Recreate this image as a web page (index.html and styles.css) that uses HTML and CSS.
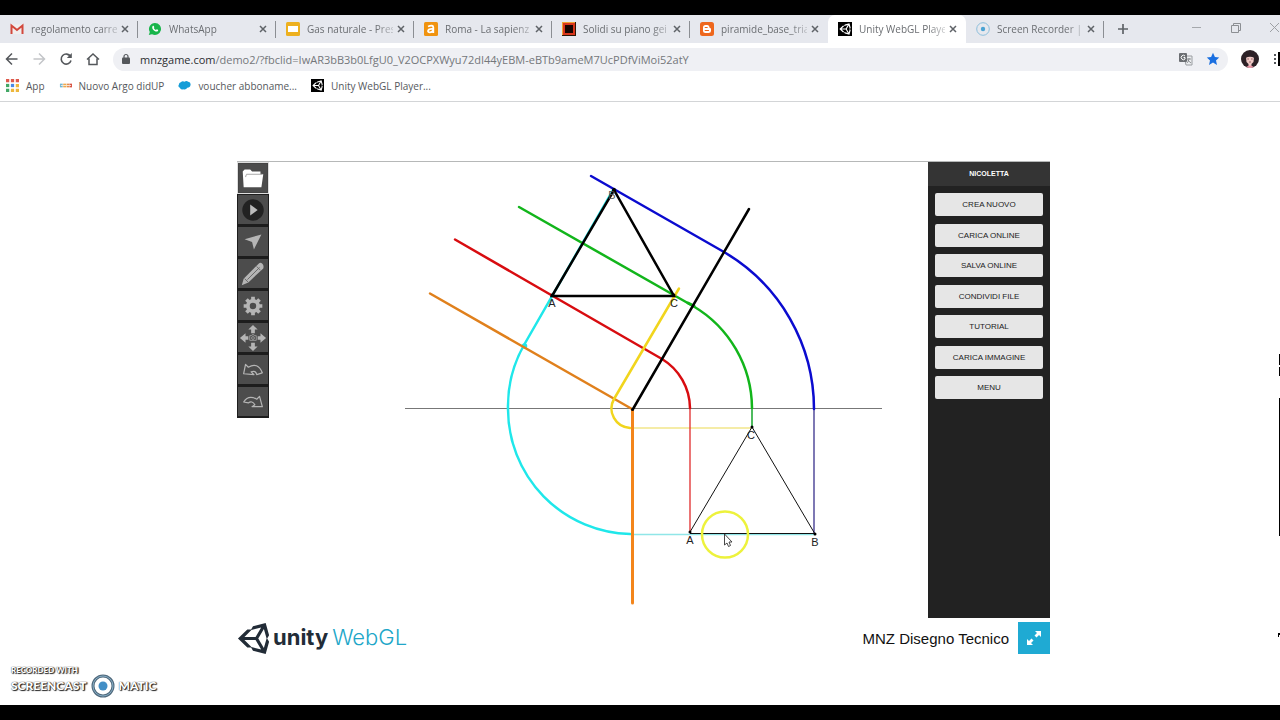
FILE: index.html
```html
<!DOCTYPE html>
<html lang="it">
<head>
    <meta charset="UTF-8">
    <meta name="viewport" content="width=device-width, initial-scale=1.0">
    <title>Unity WebGL Player | MNZ Disegno Tecnico</title>
    <link rel="stylesheet" href="styles.css">
</head>
<body>
    <svg class="defs" aria-hidden="true">
        <symbol id="unity" viewBox="0 0 512 512">
            <path fill-rule="evenodd" d="M498 206 445 15 248 66 219 117 160 116 15 256 160 396 219 395 248 446 445 497 498 306 468 256ZM224 124 375 87 288 232H115ZM224 388 115 280H288L375 426ZM417 402 330 256 417 110 459 256Z"/>
        </symbol>
        <symbol id="close" viewBox="0 0 10 10">
            <path d="M2 2 8 8M8 2 2 8" fill="none" stroke="#5f6368" stroke-width="1.5"/>
        </symbol>
    </svg>

    <header class="browser">
        <nav class="tabs">
            <div class="tab">
                <svg class="favicon" viewBox="0 0 14 14"><path d="M1 2.500H13V12H1Z" fill="#f1eeee"/><path d="M1.500 12V3.500L7 8l5.500-4.500V12" fill="none" stroke="#d2483c" stroke-width="2"/></svg>
                <a href="#">regolamento carre</a>
                <button class="tab-close" aria-label="Chiudi"><svg><use href="#close"/></svg></button>
            </div>
            <div class="tab">
                <svg class="favicon" viewBox="0 0 14 14"><path d="M7 1a6 6 0 1 1-3 11.200L.800 13l1-3A6 6 0 0 1 7 1Z" fill="#18b54b"/><path d="M4.500 4.200c1-1 1.500 0 1.800 1l-.5.900c.5.900 1.200 1.500 2.100 2l.9-.8c1 .4 2 .8 1.100 1.700C8 11 3 7 4.500 4.200Z" fill="#fff"/></svg>
                <a href="#">WhatsApp</a>
                <button class="tab-close" aria-label="Chiudi"><svg><use href="#close"/></svg></button>
            </div>
            <div class="tab">
                <svg class="favicon" viewBox="0 0 14 14"><rect width="14" height="14" rx="1.500" fill="#edb01f"/><rect x="2" y="4" width="10" height="6" fill="#fff"/></svg>
                <a href="#">Gas naturale - Pres</a>
                <button class="tab-close" aria-label="Chiudi"><svg><use href="#close"/></svg></button>
            </div>
            <div class="tab">
                <svg class="favicon" viewBox="0 0 14 14"><rect width="14" height="14" rx="1.500" fill="#f0930f"/><path d="M4 4.500Q9.300 2.500 9.300 5.500V11M9 7C3 6.500 3 10.500 6 10.300Q8 10.300 9 8.500" fill="none" stroke="#fff" stroke-width="1.800"/></svg>
                <a href="#">Roma - La sapienz</a>
                <button class="tab-close" aria-label="Chiudi"><svg><use href="#close"/></svg></button>
            </div>
            <div class="tab">
                <svg class="favicon" viewBox="0 0 14 14"><rect width="14" height="14" fill="#2b1606"/><rect width="13" height="13" fill="#f0a030"/><rect x="1" y="1" width="12" height="12" fill="#d9361c"/><rect x="3" y="3" width="8" height="8" fill="#190400"/></svg>
                <a href="#">Solidi su piano gei</a>
                <button class="tab-close" aria-label="Chiudi"><svg><use href="#close"/></svg></button>
            </div>
            <div class="tab last">
                <svg class="favicon" viewBox="0 0 14 14"><rect width="14" height="14" rx="2.500" fill="#ee671d"/><path d="M5.500 3H7.500Q9.500 3 9.500 5.500 9.500 6 11 6.500V9Q11 11 8.500 11H5.500Q3 11 3 8.500V5.500Q3 3 5.500 3Z" fill="#fff"/><path d="M5.200 5.500H7.200M5.200 8.500H8.500" stroke="#ee671d" stroke-width="1.200" stroke-linecap="round"/></svg>
                <a href="#">piramide_base_tria</a>
                <button class="tab-close" aria-label="Chiudi"><svg><use href="#close"/></svg></button>
            </div>
            <div class="tab active">
                <svg class="favicon unity-icon"><use href="#unity"/></svg>
                <a href="#">Unity WebGL Playe</a>
                <button class="tab-close" aria-label="Chiudi"><svg><use href="#close"/></svg></button>
            </div>
            <div class="tab">
                <svg class="favicon" viewBox="0 0 14 14"><circle cx="7" cy="7" r="6.300" fill="none" stroke="#8dbfdc"/><circle cx="7" cy="7" r="2.200" fill="#4ba3d3"/></svg>
                <a href="#">Screen Recorder |</a>
                <button class="tab-close" aria-label="Chiudi"><svg><use href="#close"/></svg></button>
            </div>
            <button class="new-tab" aria-label="Nuova scheda"><svg viewBox="0 0 12 12"><path d="M6 1V11M1 6H11" stroke="#5f6368" stroke-width="1.700"/></svg></button>
            <div class="window-controls">
                <button aria-label="Riduci"><svg viewBox="0 0 10 10"><path d="M0 4.500H9" stroke="#a5a8ac"/></svg></button>
                <button aria-label="Ripristina"><svg viewBox="0 0 10 10"><path d="M.5 2.500H7.500V9.500H.5ZM2.500 2.500V.5H9.500V7.500H7.500" fill="none" stroke="#8c8f93"/></svg></button>
                <button aria-label="Chiudi finestra"><svg viewBox="0 0 10 10"><path d="M0 0 9 9M9 0 0 9" stroke="#9da0a4"/></svg></button>
            </div>
        </nav>

        <div class="toolbar">
            <button aria-label="Indietro"><svg viewBox="0 0 14 14"><path d="M12.500 7H2M7 1.500 1.500 7 7 12.500" fill="none" stroke="#54575b" stroke-width="1.500"/></svg></button>
            <button aria-label="Avanti"><svg viewBox="0 0 14 14"><path d="M1.500 7H12M7 1.500 12.500 7 7 12.500" fill="none" stroke="#c3c5c8" stroke-width="1.500"/></svg></button>
            <button aria-label="Ricarica"><svg viewBox="0 0 14 14"><path d="M11.500 4.500A5 5 0 1 0 12 8.500" fill="none" stroke="#54575b" stroke-width="1.600"/><path d="M12.800 1V6H7.800Z" fill="#54575b"/></svg></button>
            <button aria-label="Pagina iniziale"><svg viewBox="0 0 14 14"><path d="M1 7.500 7 2l6 5.500M3 6.500V12.500H11V6.500" fill="none" stroke="#54575b" stroke-width="1.500"/></svg></button>
            <div class="address">
                <svg class="lock" viewBox="0 0 10 12"><rect x="1" y="4.500" width="8" height="6.500" rx="1" fill="#54575b"/><path d="M3 5V3.500a2 2 0 0 1 4 0V5" fill="none" stroke="#54575b" stroke-width="1.200"/></svg>
                <a class="url" href="#"><b>mnzgame.com</b>/demo2/?fbclid=IwAR3bB3b0LfgU0_V2OCPXWyu72dI44yEBM-eBTb9ameM7UcPDfViMoi52atY</a>
                <button aria-label="Traduci"><svg viewBox="0 0 14 14"><path d="M5 4H13V13H7Z" fill="#eceef0" stroke="#9a9da1"/><rect x="0" y="1" width="8" height="9" rx="1" fill="#6b6e72"/><path d="M6 4A2.200 2.200 0 1 0 6 7V5.500H4.500" fill="none" stroke="#fff"/><path d="M8 7H12M10 6V7Q9.500 9.500 8 11M8.500 8 12 11" fill="none" stroke="#777a7e" stroke-width=".8"/></svg></button>
                <button aria-label="Preferiti"><svg viewBox="0 0 14 14"><path d="M7 .800 8.900 5l4.300.400-3.200 3L11 13 7 10.600 3 13l1-4.600L.8 5.400 5.100 5Z" fill="#1a6fe0"/></svg></button>
            </div>
            <button class="avatar" aria-label="Profilo"><svg viewBox="0 0 18 18"><circle cx="9" cy="9" r="9" fill="#2c2126"/><path d="M5 7Q9 4 13 7L12.500 12 10.500 14V18H7.500V14L5.500 12Z" fill="#efc9c5"/><path d="M4.500 8Q6 3 9 3.500 13 3 13.500 8 9 5.500 4.500 8Z" fill="#2c2126"/><path d="M6.300 9H8M10 9H11.700M8 12H10" stroke="#7e4b52" stroke-width=".8"/><path d="M5 17Q9 14 13 17L9 18Z" fill="#e994a5"/></svg></button>
            <button class="more" aria-label="Altro"><svg viewBox="0 0 8 14"><path d="M2 2H4V4H2ZM2 6H4V8H2ZM2 10H4V12H2Z" fill="#54575b"/><path d="M6 0H8V14H6Z"/></svg></button>
        </div>

        <nav class="bookmarks">
            <a href="#"><svg viewBox="0 0 12 12"><path d="M0 0H3V3H0ZM4.500 0H7.500V3H4.500Z" fill="#de5a4c"/><path d="M9 0H12V3H9Z" fill="#de5a4c"/><path d="M0 4.500H3V7.500H0Z" fill="#43a866"/><path d="M4.500 4.500H7.500V7.500H4.500Z" fill="#4989e6"/><path d="M9 4.500H12V7.500H9ZM4.500 9H7.500V12H4.500ZM9 9H12V12H9Z" fill="#edb73c"/><path d="M0 9H3V12H0Z" fill="#43a866"/></svg>App</a>
            <a href="#"><svg viewBox="0 0 14 12"><path d="M1 4H4V8H1Z" fill="#72b6d5"/><path d="M4.500 4H8V8H4.500Z" fill="#eea94d"/><path d="M8.500 4H11V8H8.500Z" fill="#e98c4c"/><path d="M11.300 4H14V8H11.300Z" fill="#d95243"/><path d="M2 6H13" stroke="#f4ead9"/></svg>Nuovo Argo didUP</a>
            <a href="#"><svg viewBox="0 0 14 12"><path d="M3 2.500Q5 .500 7 2 9 .300 11 2 14 2.500 13.500 5.500 13 8.500 10 8.500 8.500 11 5.500 10 3 11 2 8.500-.5 7 1 5 1 3 3 2.500Z" fill="#149dd8"/></svg>voucher abboname...</a>
            <a href="#"><svg class="unity-icon"><use href="#unity"/></svg>Unity WebGL Player...</a>
        </nav>
    </header>

    <main>
        <section class="player">
            <div class="game">
                <div class="tools">
                    <button class="selected" aria-label="Apri"><svg viewBox="0 0 30 30"><path d="M4 8 6 6H12L14 8H23V11H26L24 25H5Z" fill="#fff"/><path d="M7 14 8 11H25" fill="none" stroke="#a4a4a4"/></svg></button>
                    <button aria-label="Avvia"><svg viewBox="0 0 30 30"><circle cx="15" cy="15" r="11.500" fill="#222"/><path d="M12 9 20 15 12 21Z" fill="#bcbcbc"/></svg></button>
                    <button aria-label="Seleziona"><svg viewBox="0 0 30 30"><path d="M6 12 24 7 16 23 14 15Z" fill="#b5b5b5"/></svg></button>
                    <button aria-label="Disegna"><svg viewBox="0 0 30 30"><path d="M3 27 5 20 21 4Q23 2 25 4T26 9L10 24Z" fill="#b5b5b5"/><path d="M6 20 10 24M9 21 22 8M19 7 23 11" stroke="#666"/></svg></button>
                    <button aria-label="Impostazioni"><svg viewBox="0 0 30 30"><circle cx="15" cy="15" r="5.500" fill="none" stroke="#b5b5b5" stroke-width="4"/><path d="M15 5V9M15 21V25M5 15H9M21 15H25M8 8 11 11M19 19 22 22M22 8 19 11M11 19 8 22" stroke="#b5b5b5" stroke-width="4"/></svg></button>
                    <button aria-label="Sposta vista"><svg viewBox="0 0 30 30"><path d="M15 1 20 6H17V10H13V6H10ZM15 29 20 24H17V20H13V24H10ZM1 15 7 10V13H10V17H7V20ZM29 15 23 10V13H20V17H23V20Z" fill="#b5b5b5"/><path d="M11.500 12.500H13.500L14 11.500H16L16.500 12.500H18.500V17.500H11.500Z" fill="none" stroke="#9b9b9b"/><circle cx="15" cy="15" r="1.500" fill="none" stroke="#9b9b9b"/></svg></button>
                    <button aria-label="Annulla"><svg viewBox="0 0 30 30"><path d="M5 19 7 9 10 12Q20 6 25 18L19 20Q18 15 13 17L16 20Z" fill="none" stroke="#b5b5b5" stroke-width="1.300" stroke-linejoin="round"/></svg></button>
                    <button aria-label="Ripeti"><svg viewBox="0 0 30 30"><path d="M25 20 22 9 19 12Q10 7 5 15L10 16Q14 13 17 18L14 20Z" fill="none" stroke="#b5b5b5" stroke-width="1.300" stroke-linejoin="round"/></svg></button>
                </div>

                <svg class="drawing" viewBox="269 162 659 456" role="img" aria-label="Ribaltamento di un triangolo">
                    <!-- linea di terra -->
                    <path d="M405 408.500H882" stroke="#777" stroke-width="1"/>
                    <!-- linee sottili di proiezione -->
                    <path d="M632 428H751" stroke="#f2e68a" stroke-width="1.500"/>
                    <path d="M630 534.500H815" stroke="#90e6e8" stroke-width="1.500"/>
                    <path d="M690 408V533" stroke="#e02a2a" stroke-width="1.300"/>
                    <path d="M752 408V427" stroke="#15a52a" stroke-width="1.500"/>
                    <path d="M814 408V533" stroke="#39308c" stroke-width="1.300"/>
                    <!-- ribaltamento -->
                    <g fill="none" stroke-width="2.500" stroke-linecap="round">
                        <path d="M613 190 524 345A124.500 124.500 0 0 0 508 409 125 125 0 0 0 630 534" stroke="#1fe7ea"/>
                        <circle cx="524.500" cy="346" r="1.500" stroke="#1fe7ea"/>
                        <path d="M591 176 724 252A182 182 0 0 1 814 409" stroke="#0b0bcf"/>
                        <path d="M519 207 693 306A119.500 119.500 0 0 1 752 408" stroke="#12b51b"/>
                        <path d="M688 303 694 306" stroke="#12b51b" stroke-width="3"/>
                        <path d="M455 239.500 662 359A58 58 0 0 1 690 408" stroke="#d80c10"/>
                        <path d="M430 293.500 632 409" stroke="#e0801c"/>
                        <path d="M632.500 410V603" stroke="#f3851b" stroke-width="3"/>
                        <path d="M679 288.500 614 399A19.500 19.500 0 0 0 630 428" stroke="#f1d51d"/>
                        <path d="M633 409 749 209" stroke="#000"/>
                        <path d="M552 296 614 190 674 296Z" stroke="#000"/>
                    </g>
                    <path d="M690 532 752 427 815 534M690 533.500H815" fill="none" stroke="#111" stroke-width="1"/>
                    <g fill="#000">
                        <circle cx="614" cy="190" r="2"/>
                        <circle cx="552" cy="295" r="1.500"/>
                        <circle cx="674" cy="295" r="1.500"/>
                        <circle cx="632.500" cy="409.500" r="1.500"/>
                        <circle cx="690" cy="532" r="1.500"/>
                        <circle cx="752" cy="427" r="1.500"/>
                        <circle cx="815" cy="534" r="1.500"/>
                    </g>
                    <g class="points">
                        <text x="612" y="199" class="muted">B</text>
                        <text x="552" y="307">A</text>
                        <text x="674" y="307">C</text>
                        <text x="751" y="439">C</text>
                        <text x="690" y="544">A</text>
                        <text x="815" y="546">B</text>
                    </g>
                    <!-- puntatore -->
                    <circle cx="725" cy="534.500" r="23" fill="none" stroke="#edf23c" stroke-width="2.500"/>
                    <path d="M724.500 534V545L727 543 728.500 546.500 730.500 545.500 729 542H732Z" fill="#fff" stroke="#333" stroke-width=".9"/>
                </svg>

                <aside class="panel">
                    <h2>NICOLETTA</h2>
                    <div class="panel-buttons">
                        <button>CREA NUOVO</button>
                        <button>CARICA ONLINE</button>
                        <button>SALVA ONLINE</button>
                        <button>CONDIVIDI FILE</button>
                        <button>TUTORIAL</button>
                        <button>CARICA IMMAGINE</button>
                        <button>MENU</button>
                    </div>
                </aside>
            </div>

            <footer class="player-footer">
                <svg class="logo"><use href="#unity"/></svg>
                <span class="brand">unity</span>
                <span class="webgl">WebGL</span>
                <span class="title">MNZ Disegno Tecnico</span>
                <button class="fullscreen" aria-label="Schermo intero"><svg viewBox="0 0 32 32"><path d="M17 9H23V15L21 13 18.500 15.500 16.500 13.500 19 11ZM9 17 11 19 13.500 16.500 15.500 18.500 13 21 15 23H9Z" fill="#fff"/></svg></button>
            </footer>
        </section>
    </main>

    <div class="watermark">
        <span class="recorded">RECORDED WITH</span>
        <div class="watermark-name">
            <span>SCREENCAST</span>
            <svg viewBox="0 0 24 24"><circle cx="12" cy="12" r="10" fill="#fff" stroke="#50697c" stroke-width="3"/><circle cx="12" cy="12" r="10" fill="none" stroke="#85adc5"/><circle cx="12" cy="12" r="4.500" fill="#438fc6"/></svg>
            <span>MATIC</span>
        </div>
    </div>
    <svg class="edge" viewBox="0 0 2 300" aria-hidden="true"><path d="M1 0H2V11H1ZM1 13H2V22H1ZM1 44H2V182H1ZM0 279H2V281H1V283H0Z"/></svg>
</body>
</html>
```
FILE: styles.css
```css
* {
    margin: 0;
    padding: 0;
    box-sizing: border-box;
}

body {
    font-family: "Open Sans", "Noto Sans", sans-serif;
    background: #fff;
    min-height: 100vh;
    border-top: 15px solid #000;
    border-bottom: 15px solid #000;
    display: flex;
    flex-direction: column;
    position: relative;
    overflow: hidden;
}

a {
    color: inherit;
    text-decoration: none;
}

button {
    background: none;
    border: none;
    font: inherit;
    color: inherit;
    cursor: pointer;
    display: flex;
    align-items: center;
    justify-content: center;
}

svg {
    display: block;
    flex-shrink: 0;
}

.defs {
    position: absolute;
    width: 0;
    height: 0;
}

/* browser */
.browser {
    border-bottom: 1px solid #d3d5d7;
    overflow: hidden;
}

.tabs {
    display: flex;
    height: 28px;
    background: #e6e8ee;
    font-size: 10px;
    color: #6b6e72;
}

.tab {
    width: 138px;
    display: flex;
    align-items: center;
    gap: 7px;
    padding: 0 8px 0 10px;
    background: linear-gradient(#8b8e93, #8b8e93) right center / 1px 17px no-repeat;
}

.tab.last {
    background: none;
}

.tab.active {
    background: #fff;
    border-radius: 7px 7px 0 0;
}

.tab a {
    flex: 1;
    min-width: 0;
    margin-right: -4px;
    white-space: nowrap;
    mask-image: linear-gradient(to right, #000 80%, rgba(0, 0, 0, 0.3));
}

.favicon {
    width: 14px;
    height: 14px;
}

.unity-icon {
    background: #000;
    fill: #fff;
    padding: 1px;
}

.tab-close svg {
    width: 10px;
    height: 10px;
}

.new-tab {
    width: 38px;
}

.new-tab svg {
    width: 12px;
    height: 12px;
}

.window-controls {
    display: flex;
    gap: 29px;
    margin-left: auto;
    padding-bottom: 3px;
}

.window-controls svg {
    width: 10px;
    height: 10px;
}

.toolbar {
    display: flex;
    align-items: center;
    gap: 13px;
    height: 32px;
    padding-left: 5px;
}

.toolbar button svg {
    width: 14px;
    height: 14px;
}

.address {
    flex: 1;
    display: flex;
    align-items: center;
    gap: 13px;
    height: 23px;
    padding: 0 8px;
    border-radius: 12px;
    background: #eff0f4;
    font-size: 11px;
    color: #74777b;
}

.lock {
    width: 10px;
    height: 12px;
}

.url {
    flex: 1;
    margin-left: -4px;
    white-space: nowrap;
}

.url b {
    font-weight: 400;
    color: #2c2e31;
}

.toolbar .avatar svg {
    width: 18px;
    height: 18px;
}

.toolbar .more svg {
    width: 8px;
}

.bookmarks {
    display: flex;
    gap: 14px;
    height: 26px;
    padding-left: 6px;
    padding-bottom: 5px;
    align-items: center;
    font-size: 10px;
    color: #55585c;
}

.bookmarks a {
    display: flex;
    align-items: center;
    gap: 7px;
    white-space: nowrap;
}

.bookmarks svg {
    width: 13px;
    height: 13px;
}

/* player */
main {
    display: flex;
    justify-content: center;
    padding: 59px 0 0 7px;
}

.player {
    width: 100%;
    max-width: 813px;
    font-family: "Liberation Sans", Arial, sans-serif;
}

.game {
    display: grid;
    grid-template-columns: 32px 1fr 122px;
    border-top: 1px solid #b6b8b8;
}

.tools button {
    width: 32px;
    height: 32px;
    background: #4c4c4c;
    border: 1px solid #1d1d1d;
    border-width: 1px 1px 2px;
}

.tools button.selected {
    border: 1px solid #ddd;
    outline: 1px solid #444;
    outline-offset: -2px;
}

.tools svg {
    width: 28px;
    height: 28px;
}

.drawing {
    width: 100%;
}

.points {
    font-size: 11px;
    text-anchor: middle;
    fill: #222;
}

.muted {
    fill: #555;
}

.panel {
    background: #222;
}

.panel h2 {
    height: 24px;
    line-height: 24px;
    background: #343434;
    color: #fff;
    font-size: 7px;
    text-align: center;
}

.panel-buttons {
    display: flex;
    flex-direction: column;
    justify-content: space-between;
    height: 206px;
    margin: 7px;
}

.panel-buttons button {
    height: 23px;
    background: #e6e6e6;
    border-radius: 2px;
    font-size: 8px;
    color: #222;
}

.player-footer {
    display: flex;
    align-items: center;
    height: 32px;
    margin-top: 4px;
}

.logo {
    width: 33px;
    height: 33px;
    fill: #222c37;
}

.brand,
.webgl {
    font-family: Inter, sans-serif;
    font-size: 22px;
    line-height: 30px;
    padding-bottom: 2px;
}

.brand {
    margin-left: 3px;
    font-weight: 700;
    color: #222c37;
}

.webgl {
    margin-left: 4px;
    font-weight: 300;
    color: #20a6c8;
}

.title {
    margin-left: auto;
    margin-right: 9px;
    font-size: 15px;
    color: #111;
}

.fullscreen {
    width: 32px;
    height: 32px;
    background: #1faad3;
}

.fullscreen svg {
    width: 32px;
    height: 32px;
}

/* overlays */
.watermark {
    position: absolute;
    left: 11px;
    bottom: 7px;
    color: #fff;
    font-family: Lato, sans-serif;
    font-weight: 900;
    text-shadow: 1px 1px 1px #222, 0 0 1px #333, 1px 0 1px #555;
}

.recorded {
    display: block;
    font-size: 8px;
    line-height: 8px;
}

.watermark-name {
    display: flex;
    align-items: center;
    gap: 4px;
    font-size: 12px;
    line-height: 24px;
}

.watermark-name svg {
    width: 24px;
    height: 24px;
}

.edge {
    position: absolute;
    right: 0;
    top: 339px;
    width: 2px;
    height: 300px;
}
```
